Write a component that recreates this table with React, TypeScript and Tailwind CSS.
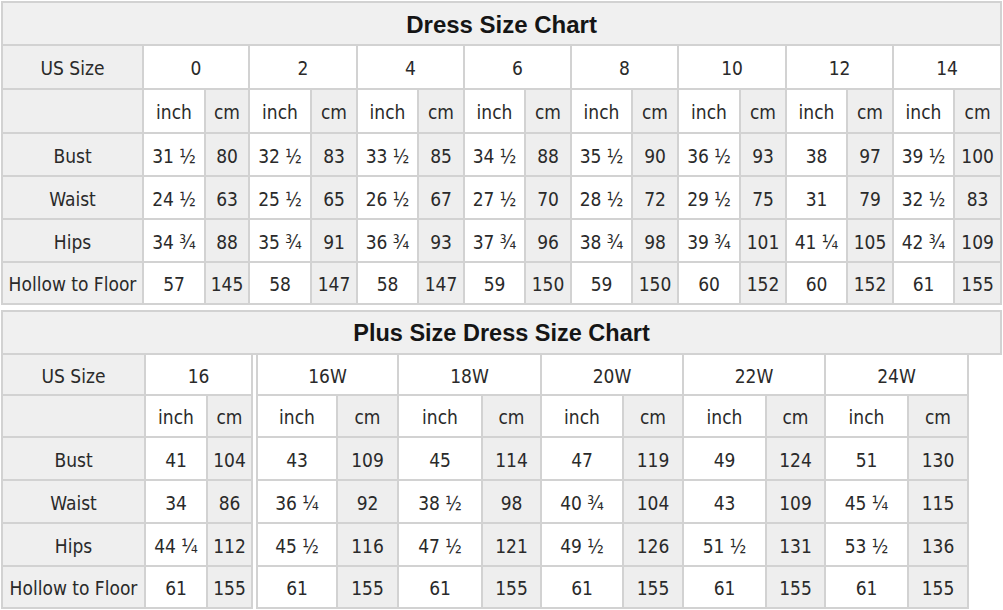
import React from "react";

const FONT = { fontFamily: '"DejaVu Sans Condensed", "DejaVu Sans", sans-serif' };

const topSizes = ["0", "2", "4", "6", "8", "10", "12", "14"];
const topRows: [string, string[]][] = [
  ["Bust", ["31 ½", "80", "32 ½", "83", "33 ½", "85", "34 ½", "88", "35 ½", "90", "36 ½", "93", "38", "97", "39 ½", "100"]],
  ["Waist", ["24 ½", "63", "25 ½", "65", "26 ½", "67", "27 ½", "70", "28 ½", "72", "29 ½", "75", "31", "79", "32 ½", "83"]],
  ["Hips", ["34 ¾", "88", "35 ¾", "91", "36 ¾", "93", "37 ¾", "96", "38 ¾", "98", "39 ¾", "101", "41 ¼", "105", "42 ¾", "109"]],
  ["Hollow to Floor", ["57", "145", "58", "147", "58", "147", "59", "150", "59", "150", "60", "152", "60", "152", "61", "155"]],
];
const topCols = [141, 62, 44, 62, 46, 61, 46, 61, 46, 61, 46, 62, 46, 61, 46, 61, 47];
const topHeights = [43, 43, 43, 42];

const plusRightSizes = ["16W", "18W", "20W", "22W", "24W"];
const plusRows: [string, string[]][] = [
  ["Bust", ["41", "104", "43", "109", "45", "114", "47", "119", "49", "124", "51", "130"]],
  ["Waist", ["34", "86", "36 ¼", "92", "38 ½", "98", "40 ¾", "104", "43", "109", "45 ¼", "115"]],
  ["Hips", ["44 ¼", "112", "45 ½", "116", "47 ½", "121", "49 ½", "126", "51 ½", "131", "53 ½", "136"]],
  ["Hollow to Floor", ["61", "155", "61", "155", "61", "155", "61", "155", "61", "155", "61", "155"]],
];
const plusLeftCols = [143, 62, 45];
const plusRightCols = [80, 61, 84, 59, 82, 60, 83, 59, 83, 60];
const plusHeights = [43, 43, 43, 42];

const cellBase = "border-2 border-[#d2d2d2] text-center align-middle px-0 pt-[3px] pb-0 whitespace-nowrap";
const labelCell = `${cellBase} bg-[#efefef]`;
const whiteCell = `${cellBase} bg-white`;
const grayCell = `${cellBase} bg-[#eeeeee]`;

function sum(a: number[]) {
  return a.reduce((x, y) => x + y, 0);
}

function TopChart() {
  return (
    <table
      className="border-collapse table-fixed text-[19px] text-[#2a2a2a]"
      style={{ ...FONT, width: sum(topCols) }}
    >
      <colgroup>
        {topCols.map((w, i) => (
          <col key={i} style={{ width: w }} />
        ))}
      </colgroup>
      <tbody>
        <tr className="h-[43px]">
          <td colSpan={17} className={`${cellBase} bg-[#f0f0f0]`}>
            <span className="font-['Liberation_Sans',Arial,sans-serif] font-bold text-[24px] text-[#151515]">
              Dress Size Chart
            </span>
          </td>
        </tr>
        <tr className="h-[44px]">
          <td className={labelCell}>US Size</td>
          {topSizes.map((s) => (
            <td key={s} colSpan={2} className={whiteCell}>
              {s}
            </td>
          ))}
        </tr>
        <tr className="h-[44px]">
          <td className={labelCell}></td>
          {topSizes.map((s) => (
            <React.Fragment key={s}>
              <td className={whiteCell}>inch</td>
              <td className={grayCell}>cm</td>
            </React.Fragment>
          ))}
        </tr>
        {topRows.map(([label, vals], ri) => (
          <tr key={label} style={{ height: topHeights[ri] }}>
            <td className={labelCell}>{label}</td>
            {vals.map((v, i) => (
              <td key={i} className={i % 2 === 0 ? whiteCell : grayCell}>
                {v}
              </td>
            ))}
          </tr>
        ))}
      </tbody>
    </table>
  );
}

function PlusLeft() {
  return (
    <table
      className="border-collapse table-fixed text-[19px] text-[#2a2a2a]"
      style={{ ...FONT, width: sum(plusLeftCols) }}
    >
      <colgroup>
        {plusLeftCols.map((w, i) => (
          <col key={i} style={{ width: w }} />
        ))}
      </colgroup>
      <tbody>
        <tr className="h-[41px]">
          <td className={labelCell}>US Size</td>
          <td colSpan={2} className={whiteCell}>
            16
          </td>
        </tr>
        <tr className="h-[42px]">
          <td className={labelCell}></td>
          <td className={whiteCell}>inch</td>
          <td className={grayCell}>cm</td>
        </tr>
        {plusRows.map(([label, vals], ri) => (
          <tr key={label} style={{ height: plusHeights[ri] }}>
            <td className={labelCell}>{label}</td>
            <td className={whiteCell}>{vals[0]}</td>
            <td className={grayCell}>{vals[1]}</td>
          </tr>
        ))}
      </tbody>
    </table>
  );
}

function PlusRight() {
  return (
    <table
      className="border-collapse table-fixed text-[19px] text-[#2a2a2a]"
      style={{ ...FONT, width: sum(plusRightCols) }}
    >
      <colgroup>
        {plusRightCols.map((w, i) => (
          <col key={i} style={{ width: w }} />
        ))}
      </colgroup>
      <tbody>
        <tr className="h-[41px]">
          {plusRightSizes.map((s) => (
            <td key={s} colSpan={2} className={whiteCell}>
              {s}
            </td>
          ))}
        </tr>
        <tr className="h-[42px]">
          {plusRightSizes.map((s) => (
            <React.Fragment key={s}>
              <td className={whiteCell}>inch</td>
              <td className={grayCell}>cm</td>
            </React.Fragment>
          ))}
        </tr>
        {plusRows.map(([label, vals], ri) => (
          <tr key={label} style={{ height: plusHeights[ri] }}>
            {vals.slice(2).map((v, i) => (
              <td key={i} className={i % 2 === 0 ? whiteCell : grayCell}>
                {v}
              </td>
            ))}
          </tr>
        ))}
      </tbody>
    </table>
  );
}

export default function App() {
  return (
    <div className="w-[1003px] h-[610px] bg-white overflow-hidden pt-[1px] pl-[1px]">
      <TopChart />
      <div className="mt-[5px] w-[1001px]">
        <div className="h-[45px] border-2 border-[#d2d2d2] bg-[#f0f0f0] flex items-center justify-center pt-[2px]">
          <span className="font-['Liberation_Sans',Arial,sans-serif] font-bold text-[23.5px] text-[#151515]">
            Plus Size Dress Size Chart
          </span>
        </div>
        <div className="flex gap-[3px] -mt-[2px]">
          <PlusLeft />
          <PlusRight />
        </div>
      </div>
    </div>
  );
}
